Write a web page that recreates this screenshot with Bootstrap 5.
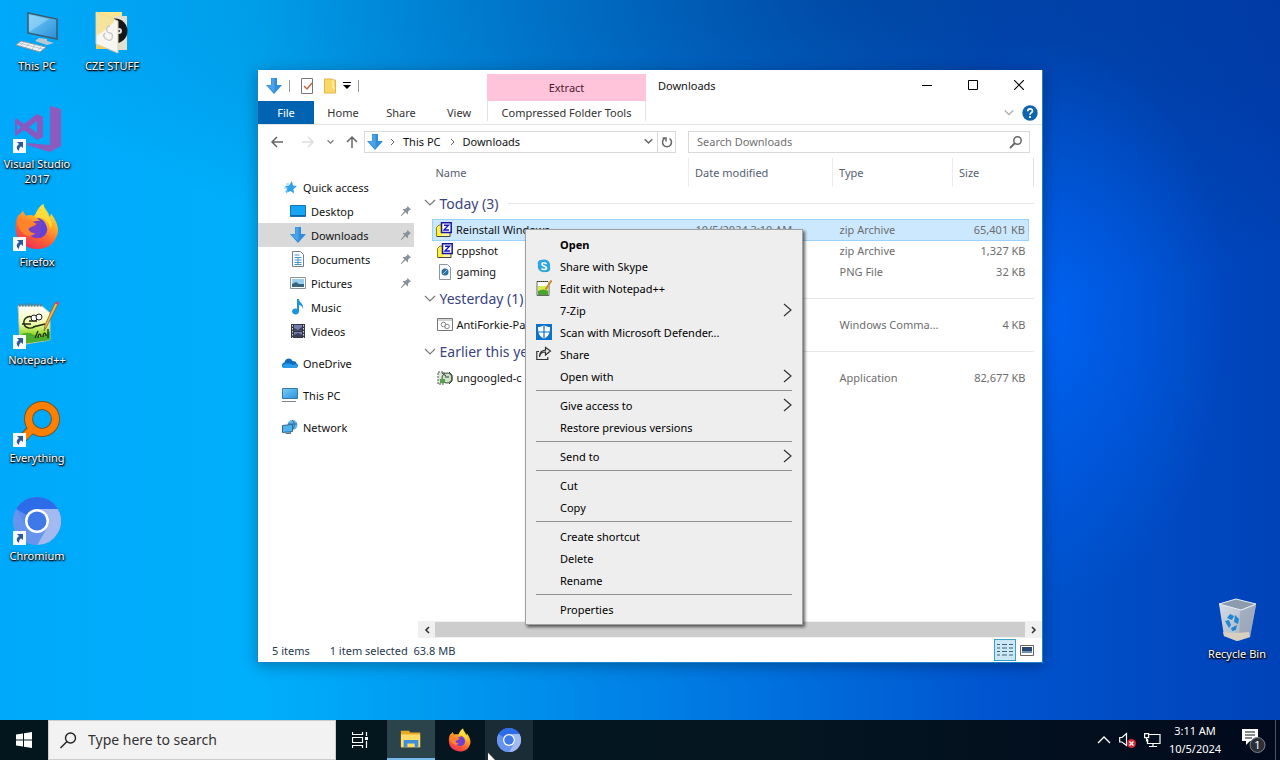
<!DOCTYPE html>
<html lang="en">
<head>
  <meta charset="UTF-8" />
  <meta name="viewport" content="width=device-width, initial-scale=1" />
  <title>Downloads</title>
  <link href="https://cdn.jsdelivr.net/npm/bootstrap@5.3.0/dist/css/bootstrap.min.css" rel="stylesheet" />
  <style>
    body {
      font-family: "Noto Sans", "Open Sans", sans-serif;
      font-size: 11px;
      line-height: 15px;
      color: #111;
    }
    button, input { font: inherit; color: inherit; }
    button { border: 0; background: none; padding: 0; }
    svg { flex-shrink: 0; display: block; }
    .ic { width: 16px; height: 16px; }

    /* Desktop */
    .desktop {
      background:
        radial-gradient(ellipse 180px 280px at 1050px 320px, rgba(0, 104, 255, .7), rgba(0, 100, 250, 0)),
        radial-gradient(ellipse 850px 300px at 850px 0, rgba(0, 30, 90, .4), rgba(0, 30, 90, 0)),
        linear-gradient(90deg, #00a9fa 0, #00affc 20%, #0094ee 38%, #0071de 60%, #0054cf 78%, #0042b8 100%);
    }
    .desk-icons {
      display: grid;
      grid-template-rows: repeat(6, 98px);
      grid-auto-columns: 75px;
      grid-auto-flow: column;
      justify-content: start;
    }
    .desk-icon {
      display: flex;
      flex-direction: column;
      align-items: center;
      gap: 3px;
      width: 74px;
      height: 98px;
      padding-top: 7px;
      color: #fff;
      text-align: center;
      text-decoration: none;
      text-shadow: 1px 1px 2px #000, 0 1px 1px #000, 0 0 3px rgba(0, 0, 0, .6);
    }
    .desk-icon svg { width: 48px; height: 48px; }
    .bin { right: 6px; bottom: 34px; }

    /* Explorer window */
    .explorer {
      left: 257px;
      top: 70px;
      width: 786px;
      height: 593px;
      background: #fff;
      border: 1px solid #1883c8;
      border-top: 0;
      box-shadow: 0 3px 14px rgba(0, 0, 0, .3);
    }
    .title-row { height: 31px; }
    .quick-bar { width: 229px; padding-left: 8px; gap: 7px; }
    .quick-sep { width: 1px; height: 12px; background: #999; }
    .tool-tab { width: 159px; margin-top: 4px; background: #ffc4da; color: #4d1830; }
    .caption-btn { width: 46px; height: 30px; display: grid; place-items: center; }
    .tab-row { height: 24px; border-bottom: 1px solid #e4e4e4; color: #333; }
    .tab-file { width: 56px; background: #0063b1; color: #fff; }
    .tab-plain { width: 58px; }
    .tab-tools { width: 159px; border: solid #e3e3e3; border-width: 0 1px; margin-left: -1px; padding-top: 2px; height: 20px; }
    .addr-row { height: 33px; padding: 0 12px 0 11px; }
    .addr-box { height: 22px; border: 1px solid #d9d9d9; }
    .addr-main { width: 312px; margin-left: 6px; padding-left: 2px; }
    .addr-main .gt { margin: 0 8px 0 7px; }
    .addr-refresh { width: 18px; height: 20px; border-left: 1px solid #d9d9d9; display: grid; place-items: center; }
    .addr-search { margin-left: 12px; padding: 0 6px 0 8px; }
    .addr-search input { border: 0; outline: 0; padding: 0; min-width: 0; background: none; }
    .addr-search input::placeholder { color: #707070; opacity: 1; }

    .side { width: 156px; padding-top: 17px; margin-right: 4px; }
    .side a {
      display: flex;
      align-items: center;
      gap: 5px;
      height: 24px;
      padding: 0 2px 0 24px;
      color: #111;
      text-decoration: none;
    }
    .side a.inner { padding-left: 32px; }
    .side a.current { background: #d9d9d9; }
    .side a.root { margin-top: 8px; }
    .side .pin { width: 12px; height: 12px; margin-left: auto; }

    .files-pane { padding: 0 8px 0 14px; }
    .files { table-layout: fixed; width: 100%; }
    .files td, .files th { padding: 0 0 0 6px; font-weight: 400; white-space: nowrap; }
    .files thead th { height: 29px; color: #566070; border-left: 1px solid #ececec; }
    .files thead th:first-child { border-left: 0; padding-left: 3px; }
    .files tbody tr { height: 21px; color: #6d6d6d; }
    .files tbody tr.group { height: 32px; font-size: 14px; color: #3a4480; }
    .files tbody td { padding-left: 7px; }
    .files .group td { padding: 0; }
    .group-line { margin-left: -9px; gap: 4px; padding-top: 1px; }
    .group-line i { flex: 1; height: 1px; background: #e6e6e6; margin-left: 6px; }
    .files .file-name { padding-left: 4px; color: #111; }
    .files .file-size { text-align: right; padding: 0 3px 0 0; }
    .files .picked td { background: #cce8ff; border: solid #99d1ff; border-width: 1px 0; }
    .files .picked td:first-child { border-left-width: 1px; padding-left: 3px; }
    .files .picked td:nth-child(4) { border-right-width: 1px; }
    .files .picked td:last-child { background: none; border: 0; }

    .hbar { height: 17px; background: #f0f0f0; }
    .hbar button { width: 17px; height: 17px; display: grid; place-items: center; }
    .hbar-thumb { background: #cdcdcd; margin: 1px 0; }
    .status { height: 24px; padding: 0 4px 0 14px; color: #263850; }
    .view-btn { width: 22px; height: 22px; display: grid; place-items: center; }
    .view-btn.on { background: #cce8f4; border: 1px solid #3aa0d0; }

    /* Context menu */
    .ctx {
      left: 525px;
      top: 229px;
      width: 278px;
      padding: 3px 2px 4px;
      font-size: 11px;
      background: #eee;
      border: 1px solid #a0a0a0;
      border-radius: 0;
      box-shadow: 2px 2px 3px rgba(0, 0, 0, .6);
    }
    .ctx .dropdown-item {
      display: flex;
      align-items: center;
      gap: 8px;
      height: 22px;
      padding: 0 8px;
      color: #000;
    }
    .ctx .chev { width: 9px; height: 14px; margin-left: auto; }
    .ctx .dropdown-divider { margin: 3px 8px; border-color: #919191; opacity: 1; }

    /* Taskbar */
    .taskbar { height: 40px; background: linear-gradient(90deg, #04161d, #051621 60%, #010a1c); color: #fff; }
    .task-btn { width: 48px; height: 40px; display: grid; place-items: center; margin-right: 1px; }
    .task-btn.running { margin-left: 2px; background: #2b444b; border-bottom: 2px solid #76b9ed; }
    .task-btn.hovered { background: #1a2c35; }
    .task-search { width: 288px; background: #f3f2f2; border: 1px solid #ccc; color: #333; padding-left: 11px; gap: 11px; }
    .task-search input { border: 0; outline: 0; padding: 0; background: none; font-size: 14px; line-height: 20px; }
    .task-search input::placeholder { color: #333; opacity: 1; }
    .clock { width: 68px; line-height: 18px; text-align: center; }
    .tray-note { width: 46px; }
    .show-desk { width: 5px; border-left: 1px solid #4c5560; }
    .cursor { left: 487px; bottom: -10px; width: 12px; height: 19px; z-index: 1100; }
  </style>
</head>
<body class="vh-100 overflow-hidden d-flex flex-column position-relative">

  <!-- Icon shapes -->
  <svg width="0" height="0" class="position-absolute">
    <defs>
      <linearGradient id="gScreen" x1="0" y1="0" x2="1" y2="1"><stop offset="0" stop-color="#7fd0f8"/><stop offset=".5" stop-color="#4fb0ea"/><stop offset="1" stop-color="#2b8fd8"/></linearGradient>
      <linearGradient id="gFox" x1=".8" y1="0" x2=".3" y2="1"><stop offset="0" stop-color="#fff04a"/><stop offset=".35" stop-color="#ffb02a"/><stop offset=".65" stop-color="#ff6a30"/><stop offset="1" stop-color="#f02a58"/></linearGradient>
      <linearGradient id="gNote" x1="0" y1="0" x2="0" y2="1"><stop offset="0" stop-color="#fff"/><stop offset=".45" stop-color="#f2fbb0"/><stop offset=".7" stop-color="#9bdc30"/><stop offset="1" stop-color="#4aa82a"/></linearGradient>
      <linearGradient id="gBin" x1="0" y1="0" x2="1" y2="1"><stop offset="0" stop-color="#d4dce6"/><stop offset="1" stop-color="#9fabba"/></linearGradient>
      <linearGradient id="gFold" x1="0" y1="0" x2="0" y2="1"><stop offset="0" stop-color="#ffe890"/><stop offset="1" stop-color="#f6cb55"/></linearGradient>
    </defs>
    <symbol id="link-arrow" viewBox="0 0 14 14"><path d="M0 0h13v14H0z" fill="#f5f9fd"/><path d="M4 3h6v6L8 7.200Q5.500 9 5.800 12 1.500 8.500 6 5z" fill="#2c5a96"/></symbol>
    <symbol id="down" viewBox="0 0 16 16"><path d="M5 0h6v7h5l-8 9-8-9h5z" fill="#2f8ddb"/><path d="M5.500.5h3v14l-7.200-7h4.200z" fill="#4ba4ea"/></symbol>
    <symbol id="pin" viewBox="0 0 12 12"><path d="M7.500 1 11 4.500 9.500 5 8 6.800 8 9.500 5.300 7.300 1.500 11 .8 10.500 4.300 6.200 2.500 4 5 4 7 2.500z" fill="#8a9299"/></symbol>
    <symbol id="fox" viewBox="0 0 48 48">
      <path d="M4 13c2-1 4-3 5-5l3 5c3-1 6-1 8 0 4-2 4-9 10-12 0 6 4 8 6 14l2-4c5 7 9 15 6 22-3 9-10 14-20 14S3 40 2 29C1 23 2 17 4 13z" fill="url(#gFox)"/>
      <path d="M30 1c-5 4-9 9-8 14 8-1 14 4 16 12 1-6 0-10-2-14-1-5-5-7-6-12z" fill="#ffe23c" opacity=".8"/>
      <ellipse cx="24" cy="27" rx="10" ry="9" fill="#7a3ec8"/>
      <path d="M23 15c7 1 10 5 10 11-1 6-5 9-10 9 4-2 6-5 4-8 3-5 0-9-4-12z" fill="#5a45d8"/>
      <path d="M3 18c3 1 6-2 11-1 4 0 6 3 9 4-1 3-6 3-8 5 0 3 3 5 7 5-7 6-17 0-19-13z" fill="#ff842a"/>
    </symbol>
    <symbol id="chromium" viewBox="0 0 48 48">
      <circle cx="24" cy="24" r="24" fill="#5b8df0"/>
      <path d="M24 12h20.800A24 24 0 0 1 24 48l10.400-18A12 12 0 0 0 24 12z" fill="#a3b9f2"/>
      <path d="M3.200 12A24 24 0 0 1 44.800 12H24A12 12 0 0 0 13.600 18z" fill="#2d6ce8"/>
      <path d="M3.200 12A24 24 0 0 0 24 48l10.400-18A12 12 0 0 1 13.600 30z" fill="#6795ee"/>
      <circle cx="24" cy="24" r="12" fill="#fff"/><circle cx="24" cy="24" r="9.500" fill="#3f79e8"/>
    </symbol>
    <symbol id="note" viewBox="0 0 48 48">
      <path d="M5 5h24l8 7v27L7 44z" fill="url(#gNote)" stroke="#b9c7ac"/>
      <path d="M6 4h23" stroke="#777" stroke-width="3" stroke-dasharray="1.500 1.500"/>
      <path d="M6 35q8-6 15-1t16-4v9L7 43z" fill="#4cae2e"/>
      <path d="M20 16c-7-2-10 3-9 7s7 6 12 2M9 23h9M16 20h8M20 26l12-3M22 37l3-7M25 37c0-5 3-5 3-1M30 36c0-5 3-5 3-1M35 28v9" fill="none" stroke="#1c2a10" stroke-width="1.300"/>
      <circle cx="21" cy="17" r="3" fill="#fff" stroke="#222"/><circle cx="26" cy="16" r="3" fill="#fff" stroke="#222"/>
      <path d="M45 3 34 25l-3 5 1-6L42 2z" fill="#f3b53f" stroke="#8a6530" stroke-width=".8"/><path d="m42 2 1.500-2 3 2L45 4z" fill="#d4456b"/>
    </symbol>
    <symbol id="pc" viewBox="0 0 16 16"><path d="M.5 1.500h15v10H.5z" fill="url(#gScreen)" stroke="#397aa5"/><path d="M0 14h14v1H0z" fill="#77848e"/></symbol>
    <symbol id="zip" viewBox="0 0 16 16"><path d="M.5 5.500 3 3h4v10l-1.500 1.500h-5z" fill="#fff33c" stroke="#8c8220"/><path d="M6 11h8v3H6z" fill="#fff8a0"/><path d="M1 14.500h13V11" fill="none" stroke="#444"/><path d="M5.500.8h9.700v9.700H5.500z" fill="#fff" stroke="#1515a0" stroke-width="1.500"/><path d="M8 3.200h4.500L8 8h5" fill="none" stroke="#1414c8" stroke-width="1.400"/></symbol>
    <symbol id="chev" viewBox="0 0 9 14"><path d="m1 1 7 6-7 6" fill="none" stroke="#333" stroke-width="1.200"/></symbol>
    <symbol id="fold-v" viewBox="0 0 12 8"><path d="m1 1 5 5 5-5" fill="none" stroke="#7a7a7a" stroke-width="1.200"/></symbol>
  </svg>

  <!-- Desktop -->
  <main class="desktop flex-fill position-relative">
    <div class="desk-icons">
      <a href="#" class="desk-icon">
        <svg viewBox="0 0 48 48"><path d="m15 6 29 6v20l-29-6z" fill="url(#gScreen)" stroke="#3b5b70" stroke-width="1.500"/><path d="m16 8 20 4-20 13z" fill="#a8def9" opacity=".5"/><path d="m26 31 8 1v2l7 2-7 2-12-4z" fill="#bcc8d0"/><path d="m8 34 25 6-6 5-24-7z" fill="#eef3f6" stroke="#8898a3"/><path d="m6 36 24 6M11 35l-4 4M17 36l-4 4M23 37l-4 5M29 39l-4 4" stroke="#aab8c2" stroke-width=".7"/></svg>
        <span>This PC</span>
      </a>
      <a href="#" class="desk-icon">
        <svg viewBox="0 0 48 48"><path d="m37 1 11 3v37l-11 6-23-7v-2l23 2z" fill="#8d5bbd"/><path fill-rule="evenodd" d="m3 13 8 6 13-10 6 3v20l-6 3-13-10-8 6-1-2V15zm1 6v7l4-4zm12 3 8 6V16z" fill="#8a59c0"/><use href="#link-arrow" y="34" width="14" height="14"/></svg>
        <span>Visual Studio 2017</span>
      </a>
      <a href="#" class="desk-icon">
        <svg viewBox="0 0 48 48"><use href="#fox" x="1" y="0" width="47" height="47"/><use href="#link-arrow" y="34" width="14" height="14"/></svg>
        <span>Firefox</span>
      </a>
      <a href="#" class="desk-icon">
        <svg viewBox="0 0 48 48"><use href="#note" width="48" height="48"/><use href="#link-arrow" y="34" width="14" height="14"/></svg>
        <span>Notepad++</span>
      </a>
      <a href="#" class="desk-icon">
        <svg viewBox="0 0 48 48"><path d="M19 29 8 41" stroke="#6d5730" stroke-width="9"/><circle cx="29" cy="20" r="13.500" fill="none" stroke="#6d5730" stroke-width="9"/><circle cx="29" cy="20" r="13.500" fill="none" stroke="#ff8000" stroke-width="7"/><path d="M20 29 8 41" stroke="#ff8000" stroke-width="7"/><use href="#link-arrow" y="34" width="14" height="14"/></svg>
        <span>Everything</span>
      </a>
      <a href="#" class="desk-icon">
        <svg viewBox="0 0 48 48"><use href="#chromium" width="48" height="48"/><use href="#link-arrow" y="34" width="14" height="14"/></svg>
        <span>Chromium</span>
      </a>
      <a href="#" class="desk-icon">
        <svg viewBox="0 0 48 48"><path d="M8 5h26v37H8z" fill="url(#gFold)"/><path d="M26 9h13v34H24z" fill="#e4e0d0"/><circle cx="27" cy="24" r="12.500" fill="#161616"/><circle cx="31" cy="24" r="3" fill="#ddd"/><circle cx="31" cy="24" r="1" fill="#222"/><path d="m8 5 22 9v32L8 37z" fill="#f7f6f1" stroke="#d5cfb8"/><path d="m8 5 18 6v4L16 24 8 29z" fill="#f6df8e" opacity=".85"/><path d="M22 19c-5 0-4 7 0 7s3 9-2 7-5-5-3-7" fill="none" stroke="#c6c6c6" stroke-width="1.300"/></svg>
        <span>CZE STUFF</span>
      </a>
    </div>

    <a href="#" class="desk-icon bin position-absolute">
      <svg viewBox="0 0 48 48"><path d="m6 9 37 1-6 32-13 4-13-5z" fill="url(#gBin)"/><path d="m27 16 16-6-6 32-11 4z" fill="#8e9bb0" opacity=".55"/><path d="m6 9 17-5 20 5-15 6z" fill="#8d9bae" stroke="#e8edf2"/><path d="m11 41 13 5 13-4-1-5-12 1-14-1z" fill="#d6cfc2"/><path d="m14 23 3-4 4 2-2 4zM22 20l4 4-1 5-4-2zM12 26l4-1 2 5-2 3zM18 33l6-3-1 5-4 1z" fill="#1f86d6"/></svg>
      <span>Recycle Bin</span>
    </a>

    <!-- Explorer window -->
    <section class="explorer position-absolute d-flex flex-column">
      <header class="title-row d-flex">
        <div class="quick-bar d-flex align-items-center">
          <svg class="ic"><use href="#down"/></svg>
          <span class="quick-sep"></span>
          <button type="button" aria-label="Properties"><svg width="20" height="16" viewBox="0 0 20 16"><path d="M4.500.5h11v15h-11z" fill="#fff" stroke="#777"/><path d="m7 8 3 3 5-6" fill="none" stroke="#c4643c" stroke-width="1.500"/></svg></button>
          <button type="button" aria-label="New folder"><svg width="12" height="16" viewBox="0 0 12 16"><path d="M.5 1H8l1 1h2.500v13H.5z" fill="#fbd768" stroke="#e0b548"/><path d="M9 2v8h2" fill="none" stroke="#fff3bd"/></svg></button>
          <button type="button" aria-label="Customize toolbar"><svg width="8" height="8" viewBox="0 0 8 8"><path d="M0 0h8v1H0zM0 3h8L4 7z"/></svg></button>
          <span class="quick-sep"></span>
        </div>
        <div class="tool-tab d-flex align-items-center justify-content-center">Extract</div>
        <div class="flex-fill ps-2 ms-1 align-self-center">Downloads</div>
        <button type="button" class="caption-btn" aria-label="Minimize"><svg width="10" height="10"><path d="M0 5.500h10" stroke="#000"/></svg></button>
        <button type="button" class="caption-btn" aria-label="Maximize"><svg width="10" height="10"><path d="M.5.5h9v9h-9z" fill="none" stroke="#000"/></svg></button>
        <button type="button" class="caption-btn" aria-label="Close"><svg width="10" height="10"><path d="m0 0 10 10M10 0 0 10" stroke="#000" stroke-width="1.100"/></svg></button>
      </header>

      <nav class="tab-row d-flex">
        <button type="button" class="tab-file">File</button>
        <button type="button" class="tab-plain">Home</button>
        <button type="button" class="tab-plain">Share</button>
        <button type="button" class="tab-plain">View</button>
        <button type="button" class="tab-tools">Compressed Folder Tools</button>
        <div class="d-flex align-items-center gap-2 ms-auto pe-1">
          <svg width="10" height="8" viewBox="0 0 12 8"><path d="m1 1 5 5 5-5" fill="none" stroke="#aaa" stroke-width="1.500"/></svg>
          <button type="button" aria-label="Help"><svg class="ic" viewBox="0 0 16 16"><circle cx="8" cy="8" r="7.700" fill="#0f64ae"/><path d="M5.700 6.300C5.700 3 10.500 3 10.500 6 10.500 7.500 8 8 8 9.800M8 11v2" fill="none" stroke="#fff" stroke-width="1.700"/></svg></button>
        </div>
      </nav>

      <div class="addr-row d-flex align-items-center">
        <button type="button" aria-label="Back"><svg width="16" height="14" viewBox="0 0 16 14"><path d="M14 7H3m5-5L3 7l5 5" fill="none" stroke="#666" stroke-width="1.500"/></svg></button>
        <button type="button" class="ms-3" aria-label="Forward"><svg width="14" height="14" viewBox="0 0 14 14"><path d="M1 7h10M7 2l5 5-5 5" fill="none" stroke="#ddd" stroke-width="1.500"/></svg></button>
        <button type="button" class="ms-2 ps-1" aria-label="Recent locations"><svg width="7" height="6" viewBox="0 0 12 8"><path d="m1 1 5 5 5-5" fill="none" stroke="#777" stroke-width="2"/></svg></button>
        <button type="button" class="ms-2 ps-1" aria-label="Up"><svg width="12" height="14" viewBox="0 0 12 14"><path d="M6 13V2M1 7l5-5 5 5" fill="none" stroke="#666" stroke-width="1.500"/></svg></button>
        <div class="addr-box addr-main d-flex align-items-center">
          <svg class="ic"><use href="#down"/></svg>
          <svg class="gt" width="5" height="8" viewBox="0 0 5 8"><path d="m1 1 3 3-3 3" fill="none" stroke="#666"/></svg>
          <a href="#" class="text-reset text-decoration-none">This PC</a>
          <svg class="mx-2" width="6" height="8" viewBox="0 0 6 8"><path d="m2 1 3 3-3 3" fill="none" stroke="#666"/></svg>
          <a href="#" class="text-reset text-decoration-none">Downloads</a>
          <button type="button" class="ms-auto me-1" aria-label="Previous locations"><svg width="9" height="7" viewBox="0 0 12 8"><path d="m1 1 5 5 5-5" fill="none" stroke="#666" stroke-width="2"/></svg></button>
          <button type="button" class="addr-refresh" aria-label="Refresh"><svg width="12" height="12" viewBox="0 0 12 12"><path d="M8.500 2.500A4.500 4.500 0 1 1 3.500 2.500M1.500 2H5v3.500" fill="none" stroke="#666" stroke-width="1.500"/></svg></button>
        </div>
        <label class="addr-box addr-search d-flex align-items-center flex-fill">
          <input type="search" class="flex-fill" placeholder="Search Downloads" aria-label="Search Downloads" />
          <svg width="14" height="14" viewBox="0 0 14 14"><circle cx="8.500" cy="5.500" r="3.700" fill="none" stroke="#666" stroke-width="1.500"/><path d="m6 8-5 5" stroke="#666" stroke-width="1.800"/></svg>
        </label>
      </div>

      <div class="d-flex flex-fill">
        <nav class="side flex-shrink-0">
          <a href="#"><svg class="ic" viewBox="0 0 16 16"><path d="m10 2 1 4.500 4 .5-3.500 3 .5 4.500L8.500 12 4 14l1-4.500L3 7l4-.5z" fill="#30a2e8"/><path d="M2 9h4M3 12h3M4 5h3" stroke="#7cc3ee"/></svg>Quick access</a>
          <a href="#" class="inner"><svg class="ic" viewBox="0 0 16 16"><path d="M.5 2.500h15v11H.5z" fill="#16a4f4" stroke="#1272b4"/><path d="M1 12h14v1H1z" fill="#0c69a8"/></svg>Desktop<svg class="pin"><use href="#pin"/></svg></a>
          <a href="#" class="inner current"><svg class="ic"><use href="#down"/></svg>Downloads<svg class="pin"><use href="#pin"/></svg></a>
          <a href="#" class="inner"><svg class="ic" viewBox="0 0 16 16"><path d="M2.500.5h8l3 3v12h-11z" fill="#fff" stroke="#708090"/><path d="M4.500 4h5M4.500 6.500h7M4.500 9h7M4.500 11.500h7M4.500 13.500h7M8 7v7" stroke="#4197d0"/></svg>Documents<svg class="pin"><use href="#pin"/></svg></a>
          <a href="#" class="inner"><svg class="ic" viewBox="0 0 16 16"><path d="M.5 2.500h15v11H.5z" fill="#fff" stroke="#8795a0"/><path d="M2 4h12v8H2z" fill="#9bcdee"/><path d="m2 9 4-2 3 2h5v3H2z" fill="#36657e"/></svg>Pictures<svg class="pin"><use href="#pin"/></svg></a>
          <a href="#" class="inner"><svg class="ic" viewBox="0 0 16 16"><path d="M7 0h2c0 4 5 4 4 10-1-3-2-4-4-4v6a3.500 3 0 1 1-2-2.300z" fill="#1c94dc"/></svg>Music</a>
          <a href="#" class="inner"><svg class="ic" viewBox="0 0 16 16"><path d="M1 1h14v14H1z" fill="#333a44"/><path d="M4 2h8v5.500H4zM4 9h8v5H4z" fill="#6f7fb0"/><path d="M4 5l4 2 4-3v3.500H4zM4 12l4-2 4 2v2H4z" fill="#3c4058"/><path d="M2.500 2v13M13.500 2v13" stroke="#ddd" stroke-dasharray="1.500 1.500"/></svg>Videos</a>
          <a href="#" class="root"><svg class="ic" viewBox="0 0 16 16"><path d="M3 13c-4 0-4-5-.5-5.500C3 3 9 2 10.500 6c3 0 4 1 4 2.500C17 10 16 13 14 13z" fill="#0f6cbd"/><path d="M3 13c-4 0-3-4 0-4 3-1 6 0 8 1 3-2 6 1 3.500 3z" fill="#2a9be8"/></svg>OneDrive</a>
          <a href="#" class="root"><svg class="ic"><use href="#pc"/></svg>This PC</a>
          <a href="#" class="root"><svg class="ic" viewBox="0 0 16 16"><circle cx="10.500" cy="6" r="5" fill="#63b5e8"/><path d="M10 1c3 2 3 8 0 10M6 5h9" fill="none" stroke="#2c6ea5"/><path d="m.5 6.500 10-1v7l-10 1z" fill="#4fb4ee" stroke="#30688e"/><path d="m3 14 6-1v2H4z" fill="#5f7890"/></svg>Network</a>
        </nav>

        <div class="flex-fill d-flex flex-column">
          <div class="files-pane flex-fill">
            <table class="files">
              <colgroup><col /><col style="width: 144px" /><col style="width: 120px" /><col style="width: 76px" /><col style="width: 5px" /></colgroup>
              <thead>
                <tr><th>Name</th><th>Date modified</th><th>Type</th><th>Size</th><th class="border-start-0 border-end"></th></tr>
              </thead>
              <tbody>
                <tr class="group"><td colspan="5"><div class="group-line d-flex align-items-center"><svg width="12" height="8"><use href="#fold-v"/></svg>Today (3)<i></i></div></td></tr>
                <tr class="picked"><td class="file-name"><div class="d-flex align-items-center gap-1"><svg class="ic"><use href="#zip"/></svg>Reinstall Windows</div></td><td>10/5/2024 3:10 AM</td><td>zip Archive</td><td class="file-size">65,401 KB</td><td></td></tr>
                <tr><td class="file-name"><div class="d-flex align-items-center gap-1"><svg class="ic"><use href="#zip"/></svg>cppshot</div></td><td></td><td>zip Archive</td><td class="file-size">1,327 KB</td><td></td></tr>
                <tr><td class="file-name"><div class="d-flex align-items-center gap-1"><svg class="ic" viewBox="0 0 16 16"><path d="M2.500.5h8l3 3v12h-11z" fill="#f7f9fa" stroke="#8b969e"/><circle cx="8" cy="8" r="3.500" fill="#2f6f9e"/><path d="m6 10 4-4" stroke="#9cc8e4"/></svg>gaming</div></td><td></td><td>PNG File</td><td class="file-size">32 KB</td><td></td></tr>
                <tr class="group"><td colspan="5"><div class="group-line d-flex align-items-center"><svg width="12" height="8"><use href="#fold-v"/></svg>Yesterday (1)<i></i></div></td></tr>
                <tr><td class="file-name"><div class="d-flex align-items-center gap-1"><svg class="ic" viewBox="0 0 16 16"><path d="M.5 1.500h15v12H.5z" fill="#fff" stroke="#777"/><path d="M1 3h14" stroke="#aaa"/><circle cx="6.500" cy="7.500" r="2.300" fill="none" stroke="#888"/><circle cx="10" cy="9.500" r="2.300" fill="none" stroke="#888"/></svg>AntiForkie-Pa</div></td><td></td><td>Windows Comma...</td><td class="file-size">4 KB</td><td></td></tr>
                <tr class="group"><td colspan="5"><div class="group-line d-flex align-items-center"><svg width="12" height="8"><use href="#fold-v"/></svg>Earlier this year (1)<i></i></div></td></tr>
                <tr><td class="file-name"><div class="d-flex align-items-center gap-1"><svg class="ic" viewBox="0 0 16 16"><path d="M1 2h6v12H1z" fill="#dbe9d6" stroke="#555" stroke-dasharray="2 1"/><circle cx="10" cy="8" r="5" fill="#cfe3cb" stroke="#3d4a3b"/><path d="M12 2l3 3v6l-3 3M5 3l4 3M8 7h4" fill="none" stroke="#29402a"/><path d="M3 9h5v4H3z" fill="#56a04e"/></svg>ungoogled-c</div></td><td></td><td>Application</td><td class="file-size">82,677 KB</td><td></td></tr>
              </tbody>
            </table>
          </div>
          <div class="hbar d-flex">
            <button type="button" aria-label="Scroll left"><svg width="6" height="8" viewBox="0 0 6 8"><path d="M5 1 2 4l3 3" fill="none" stroke="#333" stroke-width="1.600"/></svg></button>
            <div class="hbar-thumb flex-fill"></div>
            <button type="button" aria-label="Scroll right"><svg width="6" height="8" viewBox="0 0 6 8"><path d="m1 1 3 3-3 3" fill="none" stroke="#333" stroke-width="1.600"/></svg></button>
          </div>
        </div>
      </div>

      <footer class="status d-flex align-items-center">
        <span>5 items</span>
        <span class="ms-3 ps-1">1 item selected&nbsp; 63.8 MB</span>
        <button type="button" class="view-btn on ms-auto" aria-label="Details view"><svg width="16" height="14" viewBox="0 0 16 14"><path d="M0 1.500h3M0 5h3M0 8.500h3M0 12h3M5 1.500h5M5 5h5M5 8.500h5M5 12h5M12 1.500h4M12 5h4M12 8.500h4M12 12h4" stroke="#3f617c"/></svg></button>
        <button type="button" class="view-btn" aria-label="Large icons view"><svg width="14" height="11" viewBox="0 0 14 11"><path d="M.5.5h13v10H.5z" fill="#fff" stroke="#666"/><path d="M2 2h10v4H2z" fill="#2a4a74"/><path d="M2 6h10v2H2z" fill="#6d92b4"/></svg></button>
      </footer>
    </section>

    <!-- Context menu -->
    <div class="ctx dropdown-menu show">
      <button type="button" class="dropdown-item fw-bold"><span class="ic"></span>Open</button>
      <button type="button" class="dropdown-item"><svg class="ic" viewBox="0 0 16 16"><path d="M5 2c6-2 10 2 9 7 1 3-1 5-4 5-6 1-9-3-8-7C1 4 3 2 5 2z" fill="#2ca5e0"/><path d="M10.500 6C9 4 5.500 4.500 6 6.500S10.500 8 10.500 10 6.500 12 5.500 10.500" fill="none" stroke="#fff" stroke-width="1.500"/></svg>Share with Skype</button>
      <button type="button" class="dropdown-item"><svg class="ic" viewBox="0 0 16 16"><path d="M1 1.500h11l1 1v13H1z" fill="#fff" stroke="#666"/><path d="M2 6h10v8H2z" fill="#d5ec4c"/><path d="M2 11q5-3 10 0v4H2z" fill="#4aa52d"/><path d="M1 1.500h11" stroke="#333" stroke-dasharray="1 1"/><path d="m15.500.5-6 9" stroke="#c88a2c" stroke-width="2"/></svg>Edit with Notepad++</button>
      <button type="button" class="dropdown-item"><span class="ic"></span>7-Zip<svg class="chev"><use href="#chev"/></svg></button>
      <button type="button" class="dropdown-item"><svg class="ic" viewBox="0 0 16 16"><path d="M0 0h16v16H0z" fill="#0a72c8"/><path d="M8 1c2 1.500 4 2 6 2 0 6-1 9-6 12C3 12 2 9 2 3c2 0 4-.5 6-2z" fill="#fff"/><path d="M8 1v14M2 8h12" stroke="#0a72c8" stroke-width="1.200"/></svg>Scan with Microsoft Defender...</button>
      <button type="button" class="dropdown-item"><svg class="ic" viewBox="0 0 16 16"><path d="M3 5.500H.8v8h11V11M3.500 11C4 7.500 6.500 6 9.500 6V9L14.500 5 9.500 1.500v2.700C5.500 4.500 3.500 7.500 3.500 11z" fill="none" stroke="#333" stroke-width="1.200"/></svg>Share</button>
      <button type="button" class="dropdown-item"><span class="ic"></span>Open with<svg class="chev"><use href="#chev"/></svg></button>
      <hr class="dropdown-divider" />
      <button type="button" class="dropdown-item"><span class="ic"></span>Give access to<svg class="chev"><use href="#chev"/></svg></button>
      <button type="button" class="dropdown-item"><span class="ic"></span>Restore previous versions</button>
      <hr class="dropdown-divider" />
      <button type="button" class="dropdown-item"><span class="ic"></span>Send to<svg class="chev"><use href="#chev"/></svg></button>
      <hr class="dropdown-divider" />
      <button type="button" class="dropdown-item"><span class="ic"></span>Cut</button>
      <button type="button" class="dropdown-item"><span class="ic"></span>Copy</button>
      <hr class="dropdown-divider" />
      <button type="button" class="dropdown-item"><span class="ic"></span>Create shortcut</button>
      <button type="button" class="dropdown-item"><span class="ic"></span>Delete</button>
      <button type="button" class="dropdown-item"><span class="ic"></span>Rename</button>
      <hr class="dropdown-divider" />
      <button type="button" class="dropdown-item"><span class="ic"></span>Properties</button>
    </div>
  </main>

  <!-- Taskbar -->
  <footer class="taskbar d-flex flex-shrink-0">
    <button type="button" class="task-btn me-0" aria-label="Start"><svg class="ic" viewBox="0 0 16 16"><path d="m0 2.500 7-1v6H0zM8 1.300 16 0v7.500H8zM0 8.500h7v6l-7-1zM8 8.500h8V16l-8-1.300z" fill="#fff"/></svg></button>
    <label class="task-search d-flex align-items-center">
      <svg width="17" height="17" viewBox="0 0 17 17"><circle cx="10.500" cy="6" r="5" fill="none" stroke="#222" stroke-width="1.400"/><path d="M7 9.500.5 16" stroke="#222" stroke-width="1.500"/></svg>
      <input type="text" class="flex-fill" placeholder="Type here to search" aria-label="Type here to search" />
    </label>
    <button type="button" class="task-btn" aria-label="Task view"><svg class="ic" viewBox="0 0 16 16"><path d="M.5 0v2.500h10V0M.5 5.500h10v5H.5zM.5 16v-2.500h10V16M14.500 0v4M14.500 9v7" fill="none" stroke="#fff" stroke-width="1.200"/><path d="M13 5h3v3h-3z" fill="#fff"/></svg></button>
    <button type="button" class="task-btn running" aria-label="File Explorer"><svg width="22" height="20" viewBox="0 0 24 20"><path d="M1 1h9l1 2h11v16H1z" fill="#e9a824"/><path d="M1 5h21v14H1z" fill="#ffdc68"/><path d="M4 11h16v8h-4v-4H8v4H4z" fill="#3f8fd8"/></svg></button>
    <button type="button" class="task-btn" aria-label="Firefox"><svg width="24" height="24"><use href="#fox"/></svg></button>
    <button type="button" class="task-btn hovered" aria-label="Chromium"><svg width="24" height="24"><use href="#chromium"/></svg></button>

    <div class="d-flex align-items-center ms-auto gap-2">
      <button type="button" aria-label="Hidden icons"><svg width="14" height="8" viewBox="0 0 14 8"><path d="m1 7 6-6 6 6" fill="none" stroke="#fff" stroke-width="1.300"/></svg></button>
      <button type="button" aria-label="Volume"><svg width="17" height="16" viewBox="0 0 17 16"><path d="M.7 5.500H3L7.500 1.500v12L3 10H.7z" fill="none" stroke="#fff" stroke-width="1.200"/><circle cx="12.500" cy="11.500" r="4.500" fill="#d42a35"/><path d="m10.500 9.500 4 4m0-4-4 4" stroke="#fff" stroke-width="1.300"/></svg></button>
      <button type="button" aria-label="Network"><svg width="17" height="15" viewBox="0 0 17 15"><path d="M5 1.500h11v9H3.500V6M5 13.500h8M9 11v2" fill="none" stroke="#fff" stroke-width="1.200"/><path d="M.6.600h4v4h-4zM2.500 5v3h2" fill="none" stroke="#fff" stroke-width="1.200"/></svg></button>
    </div>
    <div class="clock align-self-center">3:11 AM<br />10/5/2024</div>
    <button type="button" class="tray-note" aria-label="Notifications"><svg class="ms-2 ps-1" width="30" height="28" viewBox="0 0 26 26"><path d="M1 2h16v12H9l-4 4v-4H1z" fill="#fff"/><path d="M4 5h10M4 8h10M4 11h7" stroke="#0a1523" stroke-width="1.200"/><circle cx="16.500" cy="18" r="7.500" fill="#2b3038" stroke="#7d838a"/><text x="16.500" y="22" fill="#fff" font-size="11" text-anchor="middle">1</text></svg></button>
    <div class="show-desk"></div>
  </footer>

  <svg class="cursor position-absolute" viewBox="0 0 12 19"><path d="M.5.8v15.500l3.600-3.400 2.500 5.300 2.300-1-2.500-5.200h5z" fill="#fff" stroke="#111" stroke-width=".8"/></svg>

  <script src="https://cdn.jsdelivr.net/npm/bootstrap@5.3.0/dist/js/bootstrap.bundle.min.js"></script>
</body>
</html>
